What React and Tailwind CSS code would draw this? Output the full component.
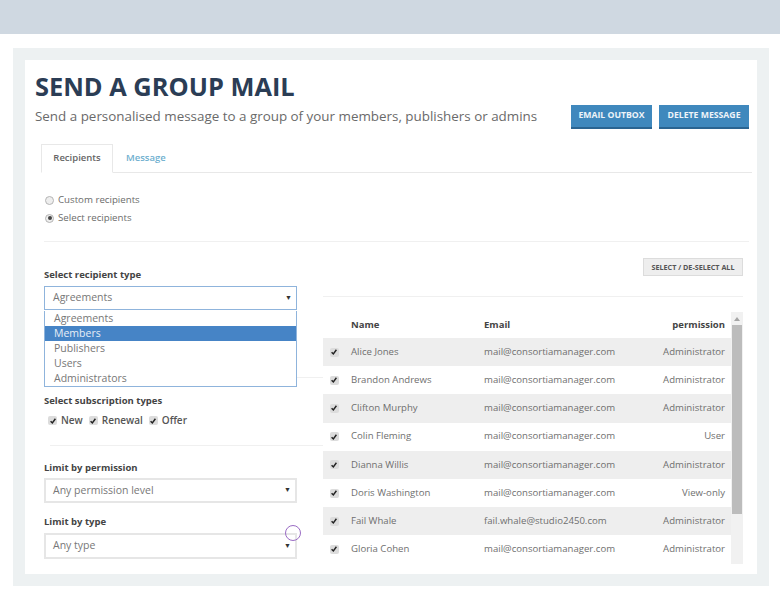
const rows = [
  ["Alice Jones", "mail@consortiamanager.com", "Administrator"],
  ["Brandon Andrews", "mail@consortiamanager.com", "Administrator"],
  ["Clifton Murphy", "mail@consortiamanager.com", "Administrator"],
  ["Colin Fleming", "mail@consortiamanager.com", "User"],
  ["Dianna Willis", "mail@consortiamanager.com", "Administrator"],
  ["Doris Washington", "mail@consortiamanager.com", "View-only"],
  ["Fail Whale", "fail.whale@studio2450.com", "Administrator"],
  ["Gloria Cohen", "mail@consortiamanager.com", "Administrator"],
];

function Check() {
  return (
    <span className="flex h-[9px] w-[9px] shrink-0 items-center justify-center rounded-[2px] bg-[#dcdcdc]">
      <svg viewBox="0 0 10 10" className="h-[8px] w-[8px]">
        <path d="M2 5.2 4.2 7.5 8 2.2" fill="none" stroke="#222" strokeWidth="1.8" />
      </svg>
    </span>
  );
}

function Radio({ on, label }) {
  return (
    <div className="flex h-[18px] items-center">
      <span className="ml-[1px] flex h-[9px] w-[9px] items-center justify-center rounded-full border border-[#b5b5b5] bg-[#eeeeee]">
        {on && <span className="h-[4px] w-[4px] rounded-full bg-[#444]" />}
      </span>
      <span className="ml-[4px] text-[9.7px] text-[#6b6b6b]">{label}</span>
    </div>
  );
}

function Select({ value, focus, className }) {
  return (
    <div className={`flex items-center justify-between pr-[4px] text-[10.5px] text-[#777] bg-white w-[253px] ${focus ? "border border-[#8fb4dc] pl-[8px]" : "border-2 border-[#e6e6e6] pl-[7px]"} ${className}`}>
      <span>{value}</span>
      <span className="text-[7px] text-[#333]">▼</span>
    </div>
  );
}

function Label({ children }) {
  return <div className="text-[9.5px] font-bold leading-[12px] text-[#444]">{children}</div>;
}

function Sub({ label }) {
  return (
    <span className="flex items-center gap-[4px]">
      <Check />
      <span className="text-[10px] font-semibold text-[#555]">{label}</span>
    </span>
  );
}

export default function App() {
  return (
    <div className="h-[598px] w-[780px] overflow-hidden bg-white font-['Open_Sans',sans-serif]">
      <div className="h-[34px] bg-[#cfd8e1]" />
      <div className="ml-[13px] mt-[14px] w-[756px] bg-[#edf1f2] p-[12px]">
        <div className="h-[514px] bg-white pl-[10px] pr-[5px] pt-[9px]">
          <h1 className="text-[25.4px] font-bold leading-[34px] text-[#2b3d55]">SEND A GROUP MAIL</h1>
          <div className="flex items-start justify-between pr-[3px]">
            <p className="mt-[3px] text-[13.4px] leading-[20px] text-[#6a6a6a]">Send a personalised message to a group of your members, publishers or admins</p>
            <div className="mt-[2px] flex gap-[7px]">
              <button className="h-[24px] w-[81px] border-b-2 border-[#2a6491] bg-[#3f88bd] text-[8.7px] font-bold text-[#eef4f9]">EMAIL OUTBOX</button>
              <button className="h-[24px] w-[90px] border-b-2 border-[#2a6491] bg-[#3f88bd] text-[8.7px] font-bold text-[#eef4f9]">DELETE MESSAGE</button>
            </div>
          </div>

          <div className="ml-[6px] mt-[15px] flex h-[29px] border-b border-[#e8e8e8]">
            <div className="flex h-[29px] w-[72px] items-center justify-center border border-b-white border-[#e8e8e8] bg-white text-[9.5px] font-semibold text-[#666]">Recipients</div>
            <div className="ml-[13px] flex items-center text-[9.5px] font-semibold text-[#6fb0cf]">Message</div>
          </div>

          <div className="ml-[9px] mt-[18px]">
            <Radio label="Custom recipients" />
            <Radio on label="Select recipients" />
          </div>
          <div className="ml-[9px] mr-[3px] mt-[14px] border-t border-[#f0f0f0]" />

          <div className="ml-[9px] flex">
            <div className="relative w-[279px] pt-[27px]">
              <Label>Select recipient type</Label>
              <Select value="Agreements" focus className="mt-[5px] h-[24px]" />
              <div className="absolute left-0 top-[69px] z-10 w-[253px] border border-t-0 border-[#8fb4dc] bg-white text-[10.5px] leading-[15px] text-[#777]">
                <div className="pl-[9px]">Agreements</div>
                <div className="bg-[#4684c6] pl-[9px] text-[#e8eef6]">Members</div>
                <div className="pl-[9px]">Publishers</div>
                <div className="pl-[9px]">Users</div>
                <div className="pl-[9px]">Administrators</div>
              </div>
              <div className="ml-[6px] mt-[67px] border-t border-[#f0f0f0]" />
              <div className="mt-[17px]"><Label>Select subscription types</Label></div>
              <div className="ml-[4px] mt-[6px] flex gap-[6px]">
                <Sub label="New" />
                <Sub label="Renewal" />
                <Sub label="Offer" />
              </div>
              <div className="ml-[6px] mt-[17px] border-t border-[#f0f0f0]" />
              <div className="mt-[16px]"><Label>Limit by permission</Label></div>
              <Select value="Any permission level" className="mt-[4px] h-[25px]" />
              <div className="mt-[13px]"><Label>Limit by type</Label></div>
              <div className="relative">
                <Select value="Any type" className="mt-[5px] h-[26px]" />
                <span className="absolute left-[241px] top-[-8px] h-[16px] w-[16px] rounded-full border border-[#9a6cc4]" />
              </div>
            </div>

            <div className="w-[420px] pt-[16px]">
              <div className="flex justify-end">
                <button className="h-[18px] w-[100px] border border-[#dcdcdc] bg-[#eeeeee] text-[7.2px] font-bold text-[#555]">SELECT / DE-SELECT ALL</button>
              </div>
              <div className="mt-[20px] border-t border-[#f0f0f0]" />
              <div className="mt-[15px] flex">
                <div className="w-[408px] shrink-0 pt-[6px]">
                  <div className="flex h-[14px] items-center text-[9.5px] font-bold text-[#444]">
                    <span className="w-[28px]" />
                    <span className="w-[133px]">Name</span>
                    <span className="flex-1">Email</span>
                    <span className="pr-[6px]">permission</span>
                  </div>
                  {rows.map((r, i) => (
                    <div key={r[0]} className={`flex h-[28.2px] items-center text-[9.6px] text-[#6f6f6f] ${i === 0 ? "mt-[6px]" : ""} ${i % 2 === 0 ? "bg-[#eeeeee]" : "bg-white"}`}>
                      <span className="flex w-[28px] justify-center pr-[6px]"><Check /></span>
                      <span className="w-[133px]">{r[0]}</span>
                      <span className="flex-1">{r[1]}</span>
                      <span className="pr-[6px]">{r[2]}</span>
                    </div>
                  ))}
                </div>
                <div className="flex h-[252px] w-[12px] flex-col items-center bg-[#f1f1f1]">
                  <span className="mt-[5px] h-0 w-0 border-x-[3px] border-b-[4px] border-x-transparent border-b-[#a5a5a5]" />
                  <span className="mt-[4px] h-[189px] w-[10px] bg-[#bcbcbc]" />
                </div>
              </div>
            </div>
          </div>
        </div>
      </div>
    </div>
  );
}
